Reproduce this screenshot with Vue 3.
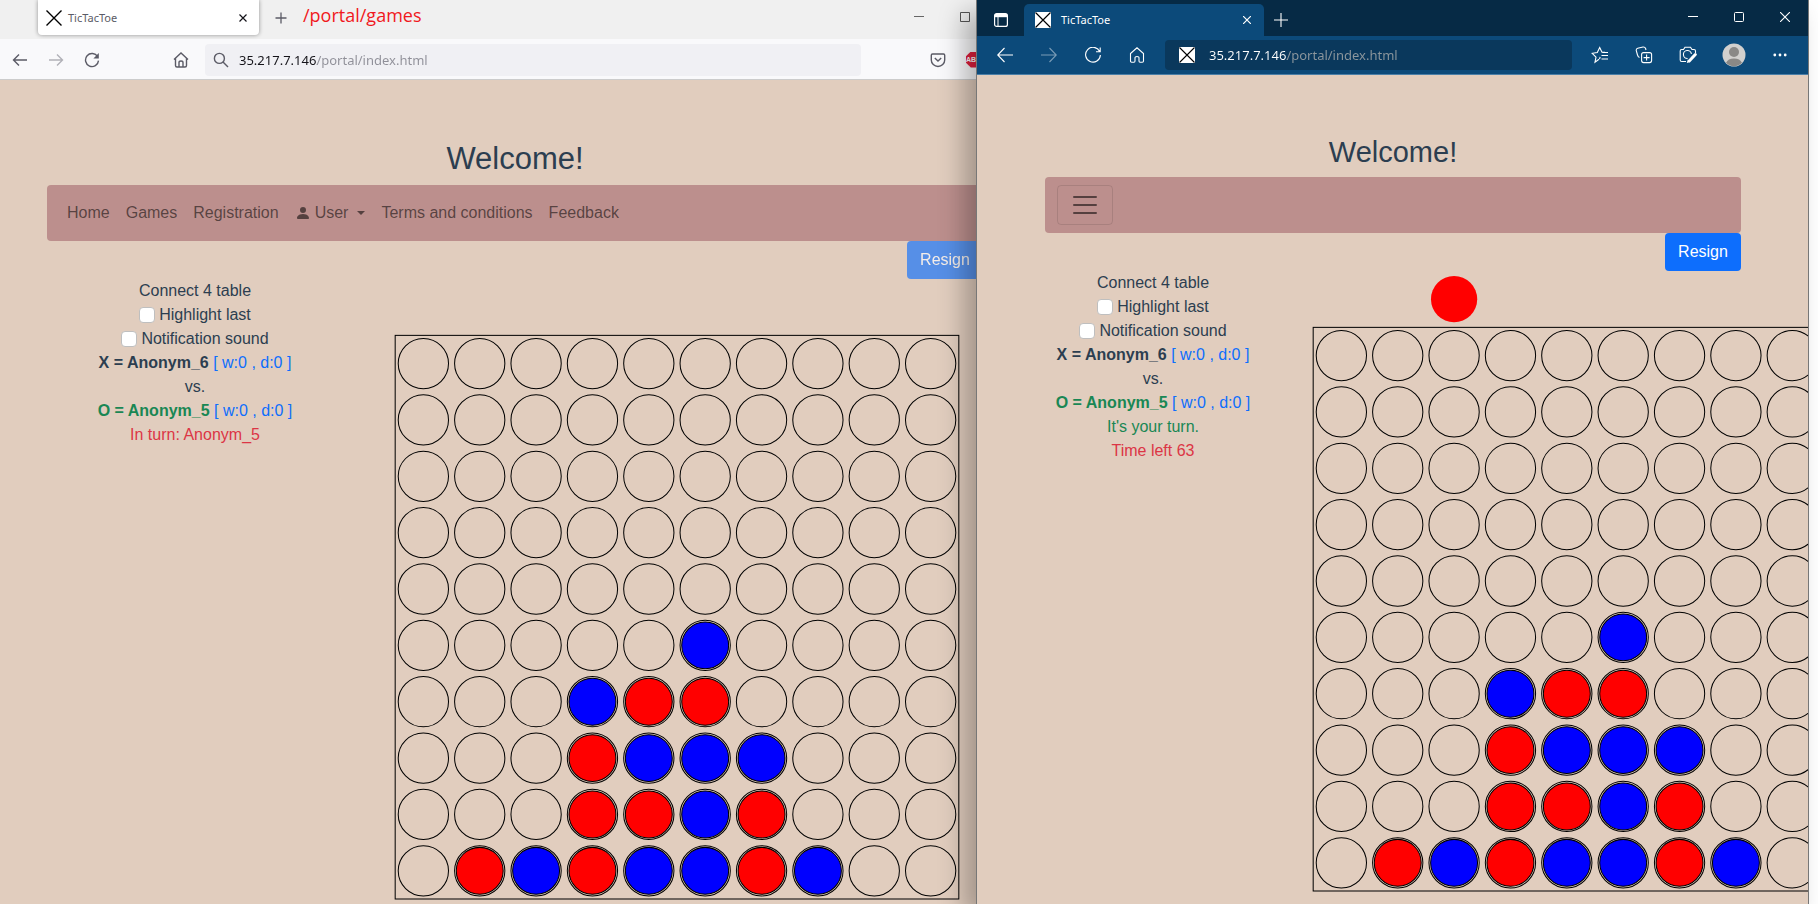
<script setup>
const placed = [
  '..........',
  '..........',
  '..........',
  '..........',
  '..........',
  '.....B....',
  '...BRR....',
  '...RBBB...',
  '...RRBR...',
  '.RBRBBRB..'
]

const cells = placed.flatMap((row, y) =>
  [...row].map((mark, x) => ({
    id: `${x}-${y}`,
    cx: x * 100 + 50,
    cy: y * 100 + 50,
    fill: mark === 'B' ? 'blue' : mark === 'R' ? 'red' : null
  }))
)

const links = ['Home', 'Games', 'Registration', 'User', 'Terms and conditions', 'Feedback']

const tables = {
  left: { turn: [{ text: 'In turn: Anonym_5', tone: 'danger' }] },
  right: {
    turn: [
      { text: "It's your turn.", tone: 'success' },
      { text: 'Time left 63', tone: 'danger' }
    ]
  }
}
</script>

<template>
  <main class="desktop">
    <section class="window firefox">
      <div class="firefox-inner">
        <header class="ff-strip">
          <div class="ff-tab">
            <svg class="favicon" viewBox="0 0 16 16"><path d="M0.5 0.5 15.5 15.5M15.5 0.5 0.5 15.5" stroke="#000" stroke-width="1.4" /></svg>
            <span class="tab-title">TicTacToe</span>
            <button class="tab-close" aria-label="Close tab">
              <svg width="8" height="8" viewBox="0 0 8 8"><path d="M0.5 0.5 7.5 7.5M7.5 0.5 0.5 7.5" stroke="#15141a" stroke-width="1.2" /></svg>
            </button>
          </div>
          <button class="ff-new" aria-label="New tab">
            <svg width="12" height="12" viewBox="0 0 12 12"><path d="M6 0.5V11.5M0.5 6H11.5" stroke="#5b5b66" stroke-width="1.3" /></svg>
          </button>
          <span class="note">/portal/games</span>
          <div class="win-buttons">
            <button aria-label="Minimize"><svg width="10" height="10" viewBox="0 0 10 10"><path d="M0 4.5H10" stroke="#666" /></svg></button>
            <button aria-label="Maximize"><svg width="10" height="10" viewBox="0 0 10 10"><path d="M0.5 0.5H9.5V9.5H0.5Z" stroke="#555" fill="none" /></svg></button>
          </div>
        </header>
        <div class="ff-toolbar">
          <button aria-label="Back"><svg width="16" height="16" viewBox="0 0 16 16"><path d="M15 8H1.5M7 2.5 1.5 8 7 13.5" /></svg></button>
          <button aria-label="Forward" class="dim"><svg width="16" height="16" viewBox="0 0 16 16"><path d="M1 8H14.5M9 2.5 14.5 8 9 13.5" /></svg></button>
          <button aria-label="Reload"><svg width="16" height="16" viewBox="0 0 16 16"><path d="M13.6 4.7A6.5 6.5 0 1 0 14.5 8.6" /><path d="M14.8 1V6.4H9.4Z" fill="#5b5b66" stroke="none" /></svg></button>
          <button aria-label="Home" class="ff-home"><svg width="16" height="16" viewBox="0 0 16 16"><path d="M1 7.5 8 1l7 6.5M2.5 6.5V13.5Q2.5 15 4 15H12Q13.5 15 13.5 13.5V6.5M6 15V10.5Q6 9 8 9T10 10.5V15" /></svg></button>
          <label class="ff-url">
            <svg width="16" height="16" viewBox="0 0 16 16"><circle cx="6.4" cy="6.4" r="5" /><path d="M10 10 15 15" /></svg>
            <input type="text" value="35.217.7.146/portal/index.html" aria-label="Address">
          </label>
          <button aria-label="Save to Pocket"><svg width="16" height="16" viewBox="0 0 16 16"><path d="M2.5 2H13.5Q14.7 2 14.7 3.3V8A6.7 6.5 0 0 1 1.3 8V3.3Q1.3 2 2.5 2ZM4.8 6 8 9 11.2 6" /></svg></button>
          <button aria-label="Adblock" class="abp"><span>AB</span></button>
        </div>
        <div class="page">
          <h2>Welcome!</h2>
          <nav class="navbar">
            <a v-for="link in links" :key="link" href="#">
              <svg v-if="link === 'User'" width="16" height="16" viewBox="0 0 16 16"><path d="M3 14s-1 0-1-1 1-4 6-4 6 3 6 4-1 1-1 1H3zm5-6a3 3 0 1 0 0-6 3 3 0 0 0 0 6z" fill="currentColor" /></svg>
              {{ link }}
              <i v-if="link === 'User'" class="caret"></i>
            </a>
          </nav>
          <div class="actions"><button class="resign" disabled>Resign</button></div>
          <div class="game">
            <div class="info">
              <div>Connect 4 table</div>
              <label><input type="checkbox">Highlight last</label>
              <label><input type="checkbox">Notification sound</label>
              <div><b>X = Anonym_6</b> <span class="score">[ w:0 , d:0 ]</span></div>
              <div>vs.</div>
              <div><b class="success">O = Anonym_5</b> <span class="score">[ w:0 , d:0 ]</span></div>
              <div v-for="line in tables.left.turn" :key="line.text" :class="line.tone">{{ line.text }}</div>
            </div>
            <svg class="board" viewBox="0 -100 1000 1100">
              <rect x="0" y="0" width="1000" height="1000" class="line" />
              <template v-for="cell in cells" :key="cell.id">
                <circle :cx="cell.cx" :cy="cell.cy" r="44.6" class="line" />
                <circle v-if="cell.fill" :cx="cell.cx" :cy="cell.cy" r="41.6" class="line" :fill="cell.fill" />
              </template>
            </svg>
          </div>
        </div>
      </div>
    </section>

    <section class="window edge">
      <header class="ed-strip">
        <button class="ed-menu" aria-label="Tab actions">
          <svg width="14" height="14" viewBox="0 0 14 14"><rect x="0.6" y="0.6" width="12.8" height="12.8" rx="2" fill="none" stroke="#fff" stroke-width="1.2" /><path d="M1 1H13V4.2H1Z" fill="#fff" /><path d="M4 4V13" stroke="#fff" /></svg>
        </button>
        <div class="ed-tab">
          <svg class="favicon" viewBox="0 0 16 16"><rect width="16" height="16" fill="#fff" /><path d="M0.5 0.5 15.5 15.5M15.5 0.5 0.5 15.5" stroke="#000" stroke-width="1.2" /></svg>
          <span class="tab-title">TicTacToe</span>
          <button class="tab-close" aria-label="Close tab">
            <svg width="8" height="8" viewBox="0 0 8 8"><path d="M0 0 8 8M8 0 0 8" stroke="#fff" stroke-width="1.2" /></svg>
          </button>
        </div>
        <button class="ed-new" aria-label="New tab">
          <svg width="14" height="14" viewBox="0 0 14 14"><path d="M7 0V14M0 7H14" stroke="#fff" stroke-width="1.1" /></svg>
        </button>
        <div class="win-buttons">
          <button aria-label="Minimize"><svg width="10" height="10" viewBox="0 0 10 10"><path d="M0 4.5H10" stroke="#fff" /></svg></button>
          <button aria-label="Maximize"><svg width="10" height="10" viewBox="0 0 10 10"><rect x="0.5" y="0.5" width="9" height="9" rx="1" stroke="#fff" fill="none" /></svg></button>
          <button aria-label="Close"><svg width="10" height="10" viewBox="0 0 10 10"><path d="M0 0 10 10M10 0 0 10" stroke="#fff" stroke-width="1.1" /></svg></button>
        </div>
      </header>
      <div class="ed-toolbar">
        <button aria-label="Back"><svg width="16" height="16" viewBox="0 0 16 16"><path d="M16 8H0.7M7.5 1 0.7 8 7.5 15" /></svg></button>
        <button aria-label="Forward" class="dim"><svg width="16" height="16" viewBox="0 0 16 16"><path d="M0 8H15.3M8.5 1 15.3 8 8.5 15" /></svg></button>
        <button aria-label="Refresh"><svg width="16" height="16" viewBox="0 0 16 16"><path d="M14.7 4.5A7.4 7.4 0 1 0 15.4 8M15.2 0.5V4.7H11" /></svg></button>
        <button aria-label="Home"><svg width="16" height="16" viewBox="0 0 16 16"><path d="M1.5 6.5 8 0.8 14.5 6.5V14Q14.5 15.2 13.3 15.2H11Q10 15.2 10 14V10.5Q10 9.5 8 9.5T6 10.5V14Q6 15.2 5 15.2H2.7Q1.5 15.2 1.5 14Z" /></svg></button>
        <label class="ed-url">
          <svg class="favicon" viewBox="0 0 16 16"><rect width="16" height="16" fill="#fff" stroke="none" /><path d="M0.5 0.5 15.5 15.5M15.5 0.5 0.5 15.5" class="favicon-x" /></svg>
          <input type="text" value="35.217.7.146/portal/index.html" aria-label="Address">
        </label>
        <button aria-label="Favorites"><svg width="18" height="18" viewBox="0 0 18 18"><path d="M8 13.2 4 16.2 5 11.2 1.2 7.3 6.3 6.5 8.7 1.5 11 6.2H14M10.5 9.5H17M11.5 6.5H17M10.5 13H17M8.5 13 9.2 11" /></svg></button>
        <button aria-label="Collections"><svg width="18" height="18" viewBox="0 0 18 18"><rect x="6.6" y="6.6" width="10" height="10" rx="2" /><path d="M11.6 8.6V14.6M8.6 11.6H14.6M4.5 11.5Q3 11 2.5 9L1.2 4.5Q1 2.7 2.7 2.2L8 1Q10 0.8 10.6 2.5L11 4" /></svg></button>
        <button aria-label="Web capture"><svg width="18" height="18" viewBox="0 0 18 18"><path d="M7 15.5H2.7Q1.2 15.5 1.2 14V5Q1.2 3.5 2.7 3.5H4.5L6 1.2H11.5L13 3.5H15Q16.5 3.5 16.5 5V7M12.4 8A4 4 0 1 0 8.6 12.5" /><path d="M16.3 8.5 10.5 14.8" stroke-width="3" stroke-linecap="round" /><path d="M7.8 17 8.8 13.6 11.4 16Z" fill="#fff" stroke="none" /></svg></button>
        <button aria-label="Profile" class="avatar"><svg width="24" height="24" viewBox="0 0 24 24"><circle cx="12" cy="12" r="11.5" fill="#d2d0ce" stroke="none" /><circle cx="12" cy="9" r="5" fill="#8a8886" stroke="none" /><path d="M4 19.8Q6 15.5 12 15.5T20 19.8A11 11 0 0 1 4 19.8Z" fill="#8a8886" stroke="none" /></svg></button>
        <button aria-label="Settings and more"><svg width="16" height="4" viewBox="0 0 16 4"><g fill="#fff" stroke="none"><circle cx="2.8" cy="2" r="1.4" /><circle cx="8" cy="2" r="1.4" /><circle cx="13.2" cy="2" r="1.4" /></g></svg></button>
      </div>
      <div class="page">
        <h2>Welcome!</h2>
        <nav class="navbar">
          <button class="toggler" aria-label="Toggle navigation">
            <svg width="30" height="30" viewBox="0 0 30 30"><path d="M4 7h22M4 15h22M4 23h22" stroke="rgba(0,0,0,.55)" stroke-width="2" stroke-linecap="round" /></svg>
          </button>
        </nav>
        <div class="actions"><button class="resign">Resign</button></div>
        <div class="game">
          <div class="info">
            <div>Connect 4 table</div>
            <label><input type="checkbox">Highlight last</label>
            <label><input type="checkbox">Notification sound</label>
            <div><b>X = Anonym_6</b> <span class="score">[ w:0 , d:0 ]</span></div>
            <div>vs.</div>
            <div><b class="success">O = Anonym_5</b> <span class="score">[ w:0 , d:0 ]</span></div>
            <div v-for="line in tables.right.turn" :key="line.text" :class="line.tone">{{ line.text }}</div>
          </div>
          <svg class="board" viewBox="0 -100 1000 1100">
            <circle cx="250" cy="-50" r="41" fill="red" />
            <rect x="0" y="0" width="1000" height="1000" class="line" />
            <template v-for="cell in cells" :key="cell.id">
              <circle :cx="cell.cx" :cy="cell.cy" r="44.6" class="line" />
              <circle v-if="cell.fill" :cx="cell.cx" :cy="cell.cy" r="41.6" class="line" :fill="cell.fill" />
            </template>
          </svg>
        </div>
      </div>
    </section>
  </main>
</template>

<style>
body {
  margin: 0;
  background: #fff;
}
</style>

<style scoped>
.desktop {
  display: grid;
  grid-template-columns: 976fr 833fr;
  height: 100vh;
  padding-right: 9px;
  overflow: hidden;
  font-family: "Liberation Sans", Arial, sans-serif;
}
.desktop * {
  box-sizing: border-box;
}
.window {
  min-width: 0;
  background: #e1cdbe;
}
.firefox {
  overflow: hidden;
}
.firefox-inner {
  width: calc(100% + 54px);
}
.edge {
  display: flex;
  flex-direction: column;
  z-index: 1;
  border-left: 1px solid #777;
  border-right: 1px solid #777;
  box-shadow: -12px 12px 24px rgba(0, 0, 0, 0.28);
}
button {
  display: flex;
  align-items: center;
  justify-content: center;
  padding: 0;
  border: 0;
  background: none;
  font: inherit;
}
.favicon {
  flex: none;
  width: 16px;
  height: 16px;
}
.tab-title {
  flex: 1;
  font: 11px/16px "Noto Sans", "Open Sans", sans-serif;
}
.tab-close {
  width: 16px;
  height: 16px;
}
.win-buttons {
  display: flex;
  height: 34px;
  margin-left: auto;
}
.win-buttons button {
  width: 46px;
}

.ff-strip {
  display: flex;
  height: 39px;
  padding: 0 42px 0 38px;
  background: #f0f0f0;
}
.ff-tab {
  display: flex;
  align-items: center;
  gap: 6px;
  width: 221px;
  height: 35px;
  padding: 0 8px;
  border-radius: 0 0 4px 4px;
  background: #fff;
  box-shadow: 0 0 4px rgba(0, 0, 0, 0.4);
  color: #5b5b66;
}
.ff-new {
  width: 44px;
  height: 35px;
}
.note {
  color: #f01820;
  font: 18px/30px "Open Sans", "Noto Sans", sans-serif;
}
.ff-toolbar {
  display: flex;
  align-items: center;
  height: 41px;
  padding: 1px 38px 0 2px;
  border-bottom: 1px solid #ccc;
  background: #f9f9fb;
}
.ff-toolbar button {
  flex: none;
  width: 36px;
  height: 36px;
}
.ff-toolbar svg {
  fill: none;
  stroke: #5b5b66;
  stroke-width: 1.4;
}
.dim {
  opacity: 0.45;
}
.ff-toolbar .ff-home {
  margin: 0 6px 0 53px;
}
.ff-url {
  display: flex;
  flex: 1;
  align-items: center;
  gap: 10px;
  height: 32px;
  margin-right: 59px;
  padding: 0 8px;
  border-radius: 4px;
  background: #f0f0f4;
}
input[type="text"] {
  flex: 1;
  min-width: 0;
  height: 24px;
  padding: 0;
  border: 0;
  outline: 0;
  background: linear-gradient(to right, #15141a 78px, #8f8f98 78px);
  background-clip: text;
  -webkit-background-clip: text;
  color: transparent;
  font: 13px/24px "Noto Sans", "Open Sans", sans-serif;
}
.ff-toolbar .abp {
  justify-content: flex-start;
  padding-left: 10px;
}
.abp span {
  width: 16px;
  height: 16px;
  background: #e01f3d;
  clip-path: polygon(30% 0, 70% 0, 100% 30%, 100% 70%, 70% 100%, 30% 100%, 0 70%, 0 30%);
  color: #fff;
  font: bold 7px/16px "Liberation Sans", sans-serif;
  text-align: left;
}

.ed-strip {
  display: flex;
  flex: none;
  height: 36px;
  background: #062a45;
}
.ed-menu {
  width: 47px;
  padding-top: 4px;
}
.ed-tab {
  display: flex;
  align-items: center;
  gap: 10px;
  width: 240px;
  height: 32px;
  margin-top: 4px;
  padding: 0 9px 0 11px;
  border-radius: 5px 5px 0 0;
  background: #0c4a7a;
  color: #fff;
}
.ed-new {
  width: 34px;
  padding-top: 4px;
}
.ed-toolbar {
  display: flex;
  flex: none;
  align-items: center;
  height: 39px;
  padding: 0 6px;
  border-bottom: 1px solid #4a7fa8;
  background: #0c4a7a;
}
.ed-toolbar button {
  flex: none;
  width: 44px;
  height: 36px;
}
.ed-toolbar .avatar {
  width: 48px;
}
.ed-toolbar svg {
  fill: none;
  stroke: #fff;
  stroke-width: 1.1;
}
.ed-toolbar .favicon-x {
  stroke: #000;
}
.ed-url {
  display: flex;
  flex: 1;
  align-items: center;
  gap: 14px;
  height: 30px;
  margin: 0 6px;
  padding: 0 14px;
  border-radius: 4px;
  background: #0a385c;
}
.ed-url input[type="text"] {
  background-image: linear-gradient(to right, #fff 78px, #8d979d 78px);
}

.page {
  overflow: hidden;
  background: #e1cdbe;
  color: #2c3e50;
  font-size: 16px;
  line-height: 24px;
}
.firefox .page {
  height: calc(100vh - 80px);
  padding: 60px 47px 0;
}
.edge .page {
  flex: 1;
  padding: 60px 67px 0 68px;
}
h2 {
  margin: 0 0 8px;
  font-size: 31px;
  font-weight: 500;
  line-height: 37px;
  text-align: center;
}
.edge h2 {
  font-size: 29px;
  line-height: 34px;
}
.navbar {
  display: flex;
  align-items: center;
  height: 56px;
  padding: 0 12px;
  border-radius: 4px;
  background: #bc8f8d;
}
.navbar a {
  display: flex;
  align-items: center;
  gap: 4px;
  padding: 8px;
  color: rgba(0, 0, 0, 0.55);
  text-decoration: none;
}
.caret {
  margin-left: 5px;
  border: 4px solid transparent;
  border-top-color: currentColor;
  border-bottom: 0;
}
.toggler {
  width: 56px;
  height: 40px;
  border: 1px solid rgba(0, 0, 0, 0.1);
  border-radius: 4px;
}
.toggler svg {
  fill: none;
}
.actions {
  display: flex;
  justify-content: flex-end;
}
.resign {
  width: 76px;
  height: 38px;
  border-radius: 4px;
  background: #0d6efd;
  color: #fff;
}
.resign:disabled {
  opacity: 0.65;
}
.game {
  display: flex;
  align-items: flex-start;
}
.info {
  flex: none;
  width: 296px;
  text-align: center;
}
.edge .info {
  width: 216px;
}
.info label {
  display: flex;
  align-items: center;
  justify-content: center;
  gap: 4px;
}
.info input {
  appearance: none;
  width: 16px;
  height: 16px;
  margin: 0;
  border: 1px solid #bfbfbf;
  border-radius: 4px;
  background: #fff;
}
.score {
  color: #0d6efd;
}
.success {
  color: #198754;
}
.danger {
  color: #dc3545;
}
.board {
  flex: none;
  width: 564px;
  height: 620px;
  margin-left: 52px;
  overflow: visible;
}
.line {
  stroke: #000;
  stroke-width: 1.8;
}
.line:not([fill]) {
  fill: none;
}
</style>
